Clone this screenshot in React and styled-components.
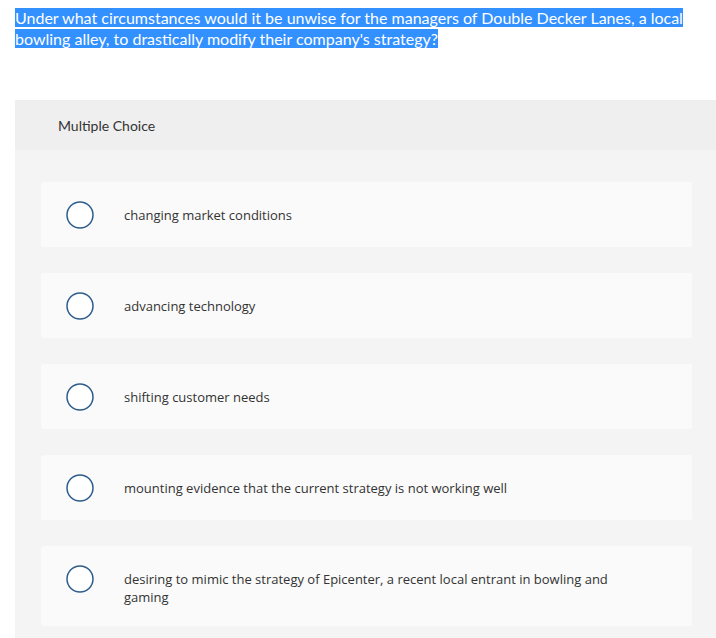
import React from 'react';
import styled, { createGlobalStyle } from 'styled-components';

const GlobalStyle = createGlobalStyle`
    html, body {
        margin: 0;
        padding: 0;
        background: #ffffff;
        font-family: Lato, "Open Sans", Arial, sans-serif;
        overflow: hidden;
    }
`

const Page = styled.div`
    width: 716px;
    height: 638px;
    padding: 7px 0 0 15px;
    box-sizing: border-box;
`

const Prompt = styled.p`
    margin: 0;
    width: 680px;
    font-size: 16px;
    line-height: 21px;
    color: #ffffff;
`

const Highlight = styled.span`
    background: #3390ff;
    color: #ffffff;
`

const Panel = styled.section`
    margin-top: 51px;
    background: #f4f4f4;
`

const PanelHeader = styled.div`
    height: 50px;
    display: flex;
    align-items: center;
    padding-left: 43px;
    background: #efefef;
    color: #333333;
    font-size: 14px;
`

const Choices = styled.div`
    display: flex;
    flex-direction: column;
    gap: 26px;
    padding: 32px 24px 20px 26px;
`

const Choice = styled.label`
    display: flex;
    align-items: flex-start;
    gap: 30px;
    padding: 19px 20px 18px 25px;
    background: #fafafa;
    border-radius: 3px;
`

const RadioIcon = styled.svg`
    flex: none;
    display: block;
    width: 28px;
    height: 28px;
`

const ChoiceText = styled.span`
    max-width: 490px;
    padding: 5px 0 2px;
    font-family: "Open Sans", Lato, Arial, sans-serif;
    font-size: 13px;
    line-height: 18px;
    color: #333333;
`

const Radio = () => (
    <RadioIcon viewBox="0 0 28 28">
        <circle cx="14" cy="14" r="13" fill="#ffffff" stroke="#2d5d8c" strokeWidth="1.5" />
    </RadioIcon>
)

const options = [
    'changing market conditions',
    'advancing technology',
    'shifting customer needs',
    'mounting evidence that the current strategy is not working well',
    'desiring to mimic the strategy of Epicenter, a recent local entrant in bowling and gaming',
]

const App = () => {
    return (
        <Page>
            <GlobalStyle />
            <Prompt>
                <Highlight>
                    Under what circumstances would it be unwise for the managers of Double Decker Lanes, a local bowling alley, to drastically modify their company's strategy?
                </Highlight>
            </Prompt>
            <Panel>
                <PanelHeader>Multiple Choice</PanelHeader>
                <Choices>
                    {options.map((text) => (
                        <Choice key={text}>
                            <Radio />
                            <ChoiceText>{text}</ChoiceText>
                        </Choice>
                    ))}
                </Choices>
            </Panel>
        </Page>
    )
}

export default App;
